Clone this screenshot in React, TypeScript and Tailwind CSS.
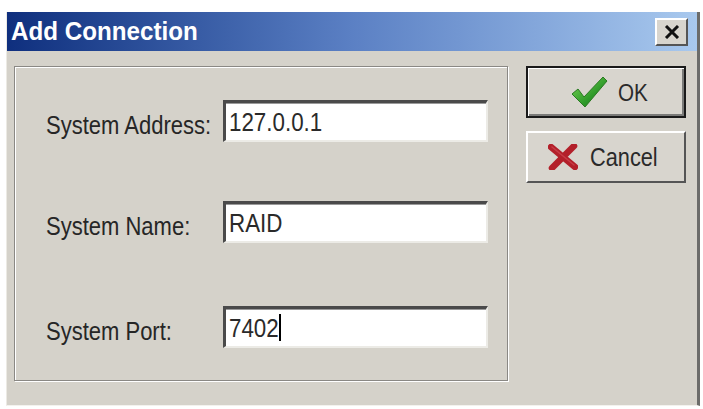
import React from "react";

const font = { fontFamily: '"Liberation Sans", Arial, sans-serif' };

function Field({ label, value, caret, mt }: { label: string; value: string; caret?: boolean; mt: string }) {
    return (
        <div className={`flex items-center h-[42px] ${mt}`}>
            <span className="w-[177px] pt-[8px] leading-none">
                <span className="inline-block origin-left scale-x-[0.88] text-[25px] leading-none text-[#262626] whitespace-nowrap">{label}</span>
            </span>
            <div className="w-[265px] h-[42px] bg-white border-t-[3px] border-l-[3px] border-t-[#4a4a4a] border-l-[#4a4a4a] border-b-2 border-r-2 border-b-[#ecebe6] border-r-[#ecebe6] flex items-center pl-[3px] shadow-[inset_0_1px_0_#9a9a9a]">
                <span className="inline-block origin-left scale-x-[0.86] text-[26px] text-[#2a2a2a] leading-none">{value}</span>
                {caret && <span className="w-[2px] h-[27px] bg-black -ml-[8px]" />}
            </div>
        </div>
    );
}

function CheckIcon() {
    return (
        <svg width="38" height="34" viewBox="0 0 38 34">
            <defs>
                <linearGradient id="chk" x1="0" y1="0" x2="1" y2="1">
                    <stop offset="0" stopColor="#7ed957" />
                    <stop offset="0.6" stopColor="#2f9a2a" />
                    <stop offset="1" stopColor="#1d6b1c" />
                </linearGradient>
            </defs>
            <path d="M2 19 L8 14 L14 22 L33 2 L37 6 L15 32 Z" fill="url(#chk)" stroke="#2a7a22" strokeWidth="1" strokeLinejoin="round" />
        </svg>
    );
}

function CrossIcon() {
    return (
        <svg width="30" height="26" viewBox="0 0 30 26">
            <path d="M3 3 L27 23 M26 2 L4 24" stroke="#b3202a" strokeWidth="6.5" strokeLinecap="round" />
            <path d="M4 3 L26 21" stroke="#d6505a" strokeWidth="1.5" strokeLinecap="round" opacity="0.6" />
        </svg>
    );
}

export default function App(): JSX.Element {
    return (
        <div className="w-[703px] h-[409px] bg-white pt-[12px] pl-[6px] pr-[3px] pb-[3px] overflow-hidden" style={font}>
            <div className="w-[694px] h-[394px] flex flex-col bg-[#d5d2ca] border-l border-l-[#eceae4] border-r-[3px] border-r-[#6c6c6a] border-b border-b-[#f3f2ee]">
                {/* title bar */}
                <div className="h-[39px] flex items-center justify-between bg-gradient-to-r from-[#0f2f7e] via-[#5b80c4] to-[#a9c9ee] pl-[4px] pr-[9px]">
                    <span className="inline-block origin-left scale-x-[0.93] text-white font-bold text-[26px] whitespace-nowrap">Add Connection</span>
                    <div className="w-[33px] h-[28px] bg-[#d8d5ce] border-t-2 border-l-2 border-t-white border-l-white border-b-2 border-r-2 border-b-[#555] border-r-[#555] flex items-center justify-center">
                        <svg width="16" height="14" viewBox="0 0 16 14">
                            <path d="M2 1 L14 13 M14 1 L2 13" stroke="#111" strokeWidth="3" />
                        </svg>
                    </div>
                </div>

                {/* body */}
                <div className="flex pl-[7px] pt-[15px] gap-[18px]">
                    <div className="w-[494px] h-[315px] border border-[#8a8884] shadow-[1px_1px_0_#ffffff,inset_1px_1px_0_#ffffff] pl-[31px] pt-[33px]">
                        <Field label="System Address:" value="127.0.0.1" mt="mt-0" />
                        <Field label="System Name:" value="RAID" mt="mt-[59px]" />
                        <Field label="System Port:" value="7402" caret mt="mt-[63px]" />
                    </div>

                    <div className="flex flex-col gap-[13px]">
                        <div className="w-[160px] h-[52px] border-2 border-[#1a1a1a] bg-[#d8d5ce] flex items-center justify-center gap-[10px] shadow-[inset_1px_1px_0_#ffffff,inset_-2px_-2px_0_#7a7a78] pl-[10px]">
                            <CheckIcon />
                            <span className="text-[24px] text-[#2a2a2a] pt-[2px] w-[34px]">
                                <span className="inline-block origin-left scale-x-[0.86]">OK</span>
                            </span>
                        </div>
                        <div className="w-[160px] h-[52px] bg-[#d8d5ce] border-t-2 border-l-2 border-t-white border-l-white border-b-2 border-r-2 border-b-[#555] border-r-[#555] flex items-center justify-center gap-[12px] pr-[4px]">
                            <CrossIcon />
                            <span className="text-[25px] text-[#2a2a2a] pt-[2px] w-[70px]">
                                <span className="inline-block origin-left scale-x-[0.87]">Cancel</span>
                            </span>
                        </div>
                    </div>
                </div>
            </div>
        </div>
    );
}
